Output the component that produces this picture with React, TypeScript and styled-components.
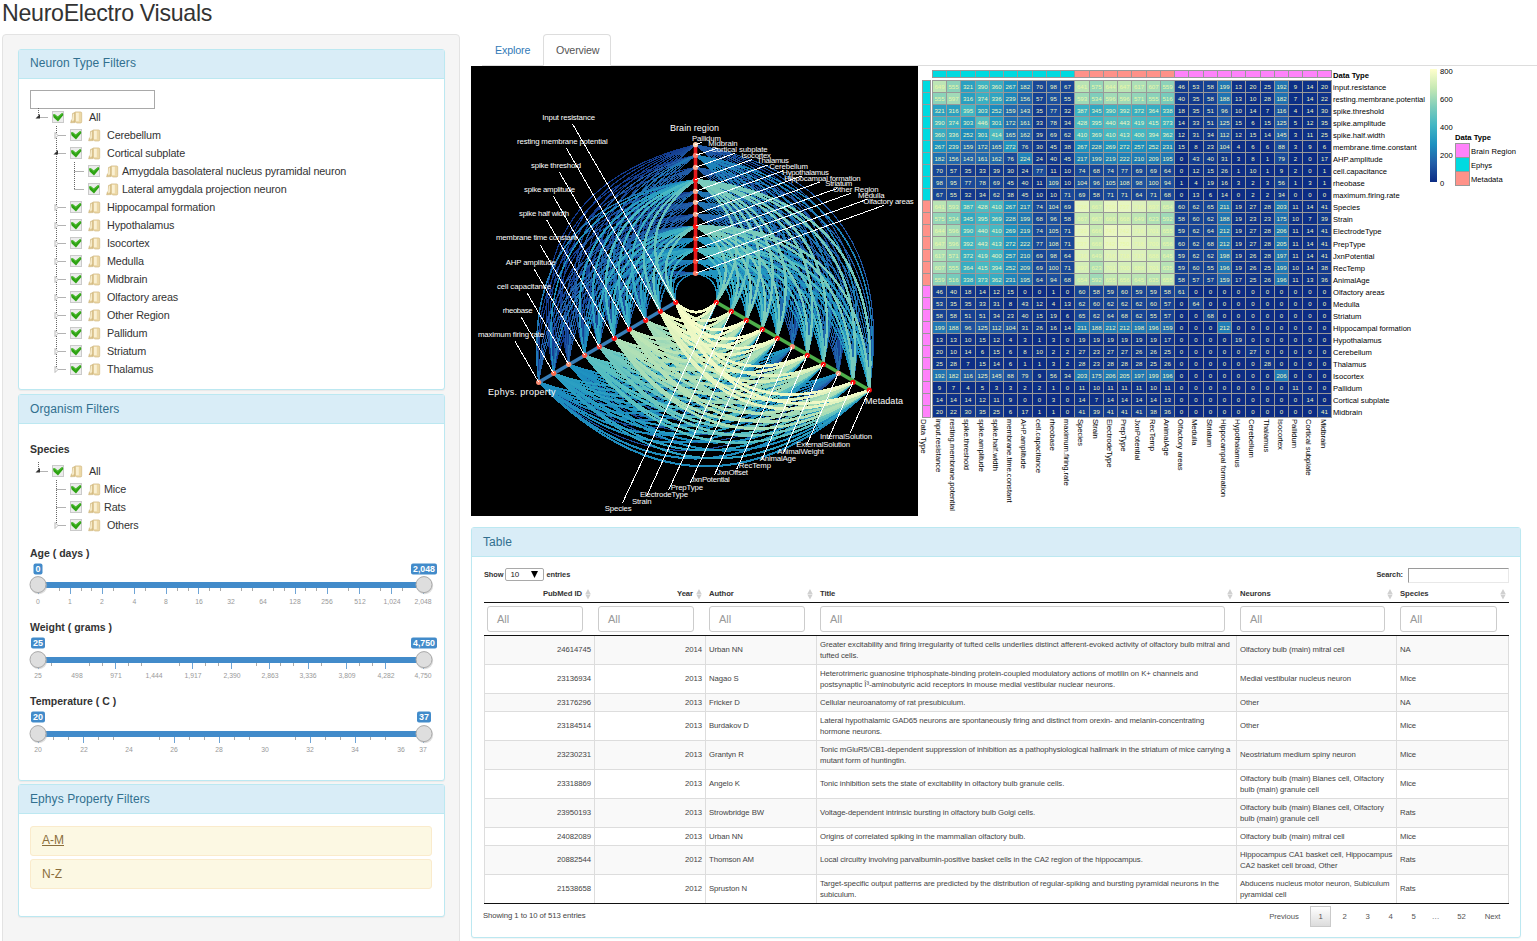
import React from "react";
import styled, { createGlobalStyle } from "styled-components";

const GlobalStyle = createGlobalStyle`
  *, *::before, *::after { box-sizing: border-box; }
  html, body { margin: 0; padding: 0; background: #fff; }
  body {
    height: 941px;
    overflow: hidden;
    color: #333;
    font-family: "Liberation Sans", Arial, sans-serif;
    font-size: 11px;
    line-height: 18px;
  }
`;

/* ---------- page frame ---------- */

const Page = styled.div`
  display: flex;
  flex-direction: column;
  width: 1537px;
  height: 941px;
  overflow: hidden;
`;

const PageTitle = styled.h1`
  flex: none;
  height: 34px;
  margin: 0;
  padding-left: 2px;
  font-size: 23.2px;
  font-weight: 400;
  line-height: 26px;
  letter-spacing: -0.3px;
`;

const Main = styled.div`
  display: flex;
  flex: 1;
  min-height: 0;
`;

const Sidebar = styled.aside`
  flex: none;
  display: flex;
  flex-direction: column;
  width: 458px;
  height: 940px;
  margin-left: 2px;
  padding: 14px 14px 0 15px;
  background: #f5f5f5;
  border: 1px solid #e3e3e3;
  border-radius: 4px;
`;

const Content = styled.main`
  flex: none;
  display: flex;
  flex-direction: column;
  width: 1066px;
  margin-left: 11px;
`;

const PanelBox = styled.section<{ $height: number; $gap?: number; $width?: number }>`
  flex: none;
  width: ${(p) => p.$width ?? 427}px;
  height: ${(p) => p.$height}px;
  margin-bottom: ${(p) => p.$gap ?? 0}px;
  background: #fff;
  border: 1px solid #bce8f1;
  border-radius: 3px;
  box-shadow: 0 1px 1px rgba(0, 0, 0, 0.05);
`;

const PanelHeader = styled.h3<{ $low?: boolean }>`
  height: 29px;
  margin: 0;
  padding: 0 11px;
  background: #d9edf7;
  border-bottom: 1px solid #bce8f1;
  color: #31708f;
  font-size: 12px;
  font-weight: 400;
  letter-spacing: 0.08px;
  line-height: ${(p) => (p.$low ? 29 : 27)}px;
`;

const PanelBody = styled.div<{ $top?: number }>`
  padding: ${(p) => p.$top ?? 11}px 12px 0 11px;
`;

/* ---------- trees ---------- */

const TreeSearch = styled.input`
  display: block;
  width: 125px;
  height: 19px;
  margin: 0 0 -1px;
  border: 1px solid #a9a9a9;
  outline: none;
`;

const TreeRow = styled.div`
  display: flex;
  align-items: center;
  height: 18px;
  white-space: nowrap;
`;

const TreeLabel = styled.span<{ $leaf?: boolean }>`
  padding-left: ${(p) => (p.$leaf ? 3 : 6)}px;
  color: #333;
  font-size: 10.8px;
  letter-spacing: -0.14px;
`;

const TreeGlyph = styled.svg`
  display: block;
  flex: none;
`;

const FieldLabel = styled.div`
  height: 18px;
  color: #333;
  font-size: 10.5px;
  font-weight: 700;
`;

const SliderGroup = styled.div`
  height: 74px;
`;

const SliderSvg = styled.svg`
  display: block;
  overflow: visible;
`;

const TreeStack = styled.div<{ $top?: number; $bottom?: number }>`
  padding-top: ${(p) => p.$top ?? 0}px;
  padding-bottom: ${(p) => p.$bottom ?? 0}px;
`;

type Connector = "root" | "mid" | "midOpen" | "last" | "branch" | "leafEnd";
type Node = { label: string; depth: number; kind: Connector; leaf?: boolean; rail?: boolean };

const treeNodes: Node[] = [
  { label: "All", depth: 0, kind: "root" },
  { label: "Cerebellum", depth: 1, kind: "mid" },
  { label: "Cortical subplate", depth: 1, kind: "midOpen" },
  { label: "Amygdala basolateral nucleus pyramidal neuron", depth: 2, kind: "branch", leaf: true, rail: true },
  { label: "Lateral amygdala projection neuron", depth: 2, kind: "leafEnd", leaf: true, rail: true },
  ...["Hippocampal formation", "Hypothalamus", "Isocortex", "Medulla", "Midbrain", "Olfactory areas", "Other Region", "Pallidum", "Striatum"].map(
    (label) => ({ label, depth: 1, kind: "mid" as Connector })
  ),
  { label: "Thalamus", depth: 1, kind: "last" },
];

const speciesNodes: Node[] = [
  { label: "All", depth: 0, kind: "root" },
  { label: "Mice", depth: 1, kind: "branch", leaf: true },
  { label: "Rats", depth: 1, kind: "branch", leaf: true },
  { label: "Others", depth: 1, kind: "last" },
];

function TreeItem({ node }: { node: Node }) {
  const cx = 8.5 + node.depth * 18;
  const width = 22 + node.depth * 18;
  const ends = node.kind === "root" || node.kind === "last" || node.kind === "leafEnd";
  const dots = { stroke: "#666", strokeWidth: 1, strokeDasharray: "1 1", fill: "none" };
  return (
    <TreeRow>
      <TreeGlyph width={width} height={18}>
        {node.rail && <path d={`M${cx - 18} 0V18`} {...dots} />}
        <path d={`M${cx} 0V${ends ? 9 : 18}`} {...dots} />
        <path d={`M${cx} 9.5H${cx + 10}`} {...dots} />
        {(node.kind === "root" || node.kind === "midOpen") && <path d={`M${cx - 3} 10.5L${cx + 1.5} 6V10.5Z`} fill="#333" />}
        {(node.kind === "mid" || node.kind === "last") && (
          <path d={`M${cx - 1.5} 6.5V12.5L${cx + 1.5} 9.5Z`} fill="#fff" stroke="#aaa" strokeWidth={0.8} />
        )}
      </TreeGlyph>
      <TreeGlyph width={12} height={12} viewBox="0 0 12 12">
        <rect x="0.5" y="0.5" width="11" height="11" fill="#ececec" stroke="#cacaca" />
        <path d="M0.9 3.6L3 3.2L5.6 5.4L10.4 1.8L11.4 4L6 10.4L1.6 6.6Z" fill="#2ea313" />
        <path d="M1.4 4L3 3.8L5.6 6.4L10.3 2.6" fill="none" stroke="#57c43c" strokeWidth="0.9" />
      </TreeGlyph>
      <TreeGlyph width={19} height={13} viewBox="0 0 19 13">
        <path d="M8.5 2.4L11 1.4V11.6L6.6 11.8L7.2 9.5L8.3 8Z" fill="#dcc48c" stroke="#c9ae72" strokeWidth="0.5" />
        <path d="M9 3L10.2 2.4V9L8.4 10.5L8 9Z" fill="#f6ebca" />
        <path d="M11.2 0.9H16.3C17.4 0.9 17.7 1.3 17.7 2.3V10.8C17.7 11.6 17.3 12 16.5 12H13L11.2 11Z" fill="#ecd8a6" stroke="#cdb277" strokeWidth="0.6" />
        <path d="M12 1.8H14.8V10.2H12Z" fill="#faf0d2" />
      </TreeGlyph>
      <TreeLabel $leaf={node.leaf}>{node.label}</TreeLabel>
    </TreeRow>
  );
}

/* ---------- sliders ---------- */

type SliderSpec = {
  label: string;
  low: string;
  high: string;
  bar: number;
  major: number[];
  minor: number[];
  texts: [number, string][];
};

const sliders: SliderSpec[] = [
  {
    label: "Age ( days )",
    low: "0",
    high: "2,048",
    bar: 20,
    major: [38, 70, 102, 134, 166, 198, 295, 327, 359, 391, 423],
    minor: [59, 81, 91, 113, 145, 177, 188, 209, 220, 241, 252, 273, 284, 305, 316, 348, 380, 402],
    texts: [[38, "0"], [70, "1"], [102, "2"], [134.5, "4"], [166, "8"], [199, "16"], [231, "32"], [263, "64"], [295, "128"], [327, "256"], [360, "512"], [392, "1,024"], [423, "2,048"]],
  },
  {
    label: "Weight ( grams )",
    low: "25",
    high: "4,750",
    bar: 21,
    major: [38, 115, 192, 231, 269, 308, 346, 385, 423],
    minor: [51, 89, 102, 128, 141, 179, 205, 218, 256, 280, 293, 321, 359, 372],
    texts: [[38, "25"], [77, "498"], [116, "971"], [154, "1,444"], [193, "1,917"], [232, "2,390"], [270, "2,863"], [308, "3,336"], [347, "3,809"], [386, "4,282"], [423, "4,750"]],
  },
  {
    label: "Temperature ( C )",
    low: "20",
    high: "37",
    bar: 21,
    major: [38, 83, 174, 219, 310, 355, 423],
    minor: [53, 68, 98, 113, 159, 189, 204, 234, 249, 295, 325, 340, 370, 385],
    texts: [[38, "20"], [84, "22"], [129, "24"], [174, "26"], [219, "28"], [265, "30"], [310, "32"], [355, "34"], [401, "36"], [423, "37"]],
  },
];

function Badge({ x, text }: { x: number; text: string }) {
  const w = text.length === 1 ? 9 : text.length === 2 ? 14 : 26;
  return (
    <>
      <rect x={x - w / 2} y={1.5} width={w} height={11} rx={2} fill="#428bca" />
      <text x={x} y={10} fill="#fff" fontSize={8.3} fontWeight={700} textAnchor="middle" textLength={w - 4} lengthAdjust="spacingAndGlyphs">
        {text}
      </text>
    </>
  );
}

function Slider({ spec }: { spec: SliderSpec }) {
  const cy = spec.bar + 3;
  return (
    <SliderGroup>
      <FieldLabel>{spec.label}</FieldLabel>
      <SliderSvg width={410} height={48} viewBox="30 0 410 48">
        <rect x={38} y={spec.bar} width={386} height={6} fill="#428bca" />
        {spec.minor.map((x) => (
          <rect key={x} x={x} y={spec.bar + 6} width={1} height={3} fill="#aaa" />
        ))}
        {spec.major.map((x) => (
          <rect key={x} x={x} y={spec.bar + 6} width={1} height={6} fill="#6fa5d6" />
        ))}
        {[38, 424].map((x) => (
          <g key={x}>
            <circle cx={x + 0.7} cy={cy + 0.8} r={8.5} fill="#bbb" opacity={0.5} />
            <circle cx={x} cy={cy - 0.4} r={8} fill="#dedede" stroke="#aaa" />
          </g>
        ))}
        {spec.texts.map(([x, t]) => (
          <text key={t} x={x} y={42} fontSize={6.8} fill="#999" textAnchor="middle">
            {t}
          </text>
        ))}
        <Badge x={38} text={spec.low} />
        <Badge x={424} text={spec.high} />
      </SliderSvg>
    </SliderGroup>
  );
}

const Collapse = styled.div<{ $underline?: boolean }>`
  height: 30px;
  margin-bottom: 3px;
  padding-left: 11px;
  background: #fcf8e3;
  border: 1px solid #faebcc;
  border-radius: 3px;
  color: #8a6d3b;
  font-size: 12px;
  line-height: ${(p) => (p.$underline ? 27 : 29)}px;
  text-decoration: ${(p) => (p.$underline ? "underline" : "none")};
`;

/* ---------- tabs ---------- */

const Tabs = styled.nav`
  display: flex;
  flex: none;
  height: 32px;
  margin-left: 11px;
  border-bottom: 1px solid #ddd;
`;

const Tab = styled.a<{ $active?: boolean }>`
  width: ${(p) => (p.$active ? 68 : 61)}px;
  height: 32px;
  padding: 0 12px;
  border: 1px solid ${(p) => (p.$active ? "#ddd" : "transparent")};
  border-bottom-color: ${(p) => (p.$active ? "#fff" : "transparent")};
  border-radius: 4px 4px 0 0;
  background: ${(p) => (p.$active ? "#fff" : "transparent")};
  color: ${(p) => (p.$active ? "#555" : "#337ab7")};
  font-size: 10.7px;
  letter-spacing: -0.15px;
  line-height: 30px;
  white-space: nowrap;
`;

/* ---------- shared chart data ---------- */

const ephysNames = ["input.resistance", "resting.membrane.potential", "spike.threshold", "spike.amplitude", "spike.half.width", "membrane.time.constant", "AHP.amplitude", "cell.capacitance", "rheobase", "maximum.firing.rate"];
const metaNames = ["Species", "Strain", "ElectrodeType", "PrepType", "JxnPotential", "RecTemp", "AnimalAge"];
const brainNames = ["Olfactory areas", "Medulla", "Striatum", "Hippocampal formation", "Hypothalamus", "Cerebellum", "Thalamus", "Isocortex", "Pallidum", "Cortical subplate", "Midbrain"];
const allNames = [...ephysNames, ...metaNames, ...brainNames];

const counts: number[][] = [
  [649, 555, 321, 390, 360, 267, 182, 70, 98, 67, 641, 575, 644, 647, 617, 607, 559, 46, 53, 58, 199, 13, 20, 25, 192, 9, 14, 20],
  [555, 597, 316, 374, 336, 239, 156, 57, 95, 55, 593, 534, 596, 596, 571, 555, 516, 40, 35, 58, 188, 13, 10, 28, 182, 7, 14, 22],
  [321, 316, 395, 303, 252, 159, 143, 35, 77, 32, 387, 345, 390, 392, 372, 364, 338, 18, 35, 51, 96, 10, 14, 7, 116, 4, 14, 30],
  [390, 374, 303, 446, 301, 172, 161, 33, 78, 34, 428, 395, 440, 443, 419, 415, 373, 14, 33, 51, 125, 15, 6, 15, 125, 5, 12, 35],
  [360, 336, 252, 301, 414, 165, 162, 39, 69, 62, 410, 369, 410, 413, 400, 394, 362, 12, 31, 34, 112, 12, 15, 14, 145, 3, 11, 25],
  [267, 239, 159, 172, 165, 272, 76, 30, 45, 38, 267, 228, 269, 272, 257, 252, 231, 15, 8, 23, 104, 4, 6, 6, 88, 3, 9, 6],
  [182, 156, 143, 161, 162, 76, 224, 24, 40, 45, 217, 199, 219, 222, 210, 209, 195, 0, 43, 40, 31, 3, 8, 1, 79, 2, 0, 17],
  [70, 57, 35, 33, 39, 30, 24, 77, 11, 10, 74, 68, 74, 77, 69, 69, 64, 0, 12, 15, 26, 1, 10, 1, 9, 2, 0, 1],
  [98, 95, 77, 78, 69, 45, 40, 11, 109, 10, 104, 96, 105, 108, 98, 100, 94, 1, 4, 19, 16, 3, 2, 3, 56, 1, 3, 1],
  [67, 55, 32, 34, 62, 38, 45, 10, 10, 71, 69, 58, 71, 71, 64, 71, 68, 0, 13, 6, 14, 0, 2, 2, 34, 0, 0, 0],
];
const metaBlock: number[][] = [
  [738, 667, 739, 737, 716, 697, 654, 60, 62, 65, 211, 19, 27, 28, 203, 11, 14, 41],
  [667, 667, 666, 668, 649, 623, 592, 58, 60, 62, 188, 19, 23, 23, 175, 10, 7, 39],
  [739, 666, 747, 742, 716, 701, 655, 59, 62, 64, 212, 19, 27, 28, 206, 11, 14, 41],
  [737, 668, 742, 750, 718, 700, 656, 60, 62, 68, 212, 19, 27, 28, 205, 11, 14, 41],
  [716, 649, 716, 718, 717, 688, 645, 59, 62, 62, 198, 19, 26, 28, 197, 11, 14, 41],
  [697, 623, 701, 700, 688, 701, 635, 59, 60, 55, 196, 19, 26, 25, 199, 10, 14, 38],
  [654, 592, 655, 656, 645, 635, 655, 58, 57, 57, 159, 17, 25, 26, 196, 11, 13, 36],
];
const brainDiagonal = [61, 64, 68, 212, 19, 27, 28, 206, 11, 14, 41];

function cell(r: number, c: number): number {
  if (r > c) return cell(c, r);
  if (r < 10) return counts[r][c];
  if (r < 17) return metaBlock[r - 10][c - 10];
  return r === c ? brainDiagonal[r - 17] : 0;
}

const ramp = [
  [12, 44, 132],
  [34, 94, 168],
  [29, 145, 192],
  [65, 182, 196],
  [127, 205, 187],
  [199, 233, 180],
  [255, 255, 204],
];

function shade(t: number): string {
  const p = Math.max(0, Math.min(0.9999, t)) * 6;
  const i = Math.floor(p);
  const f = p - i;
  return `rgb(${ramp[i].map((v, k) => Math.round(v + (ramp[i + 1][k] - v) * f)).join(",")})`;
}

/* ---------- hive plot ---------- */

const Charts = styled.div`
  display: flex;
  flex: none;
  height: 461px;
`;

const ChartSvg = styled.svg`
  display: block;
  flex: none;
  font-family: "Liberation Sans", Arial, sans-serif;
`;

type Point = [number, number];
type HiveLabel = [text: string, left: number, right: number, y: number, lineX: number, lineY: number];

const ephysPoints: Point[] = [[675.7, 302.3], [660.3, 311.3], [645.7, 320.3], [629.3, 329.3], [614.3, 338.3], [599.3, 346.7], [584.7, 355.3], [568.7, 364.3], [553.7, 373.3], [538.7, 382.3]];
const metaPoints: Point[] = [[716.3, 302.3], [731.3, 311.3], [746.3, 320.3], [762.3, 329.3], [777.3, 338.3], [792.3, 346.7], [807.3, 355.3], [823.3, 364.3], [838.3, 373.3], [853, 382.3], [869.3, 390]];
const brainPoints: Point[] = [144.7, 155.3, 167.3, 179.7, 191.3, 202.3, 214.3, 226.3, 238.3, 249.3, 261.3, 273.3].map((y) => [695.5, y]);

const ephysLabels: HiveLabel[] = [
  ["Input resistance", 542.3, 595, 117, 572.7, 124.3],
  ["resting membrane potential", 517, 607.7, 141, 566.3, 148],
  ["spike threshold", 531, 581, 165, 559.3, 172],
  ["spike amplitude", 524, 575, 189, 553.3, 196],
  ["spike half width", 519, 569, 213, 546.7, 220],
  ["membrane time constant", 496, 577, 237, 540.3, 245],
  ["AHP amplitude", 505.7, 555.7, 262, 534.3, 269.3],
  ["cell capacitance", 497, 551, 286, 527.3, 293.3],
  ["rheobase", 502.7, 532.7, 310, 521.3, 317.3],
  ["maximum firing rate", 478, 544, 334, 515, 341.3],
];
const brainLabels: HiveLabel[] = [
  ["Pallidum", 692, 721, 138, 701.7, 142.3],
  ["Midbrain", 708.3, 737.7, 143, 718.3, 148],
  ["Cortical subplate", 711.3, 767.7, 149, 735, 153.3],
  ["Isocortex", 741.3, 771, 155, 751.7, 159.7],
  ["Thalamus", 757, 789, 160.3, 767.7, 165],
  ["Cerebellum", 769.3, 808, 166, 783.3, 170.7],
  ["Hypothalamus", 782.3, 829, 172, 801.7, 176],
  ["Hippocampal formation", 784.3, 860.7, 178, 820, 182],
  ["Striatum", 825.3, 852.3, 183.3, 836.7, 188.7],
  ["Other Region", 833, 878.7, 189, 850.7, 193.3],
  ["Medulla", 858, 884.7, 195, 867.3, 199.3],
  ["Olfactory areas", 863.3, 913.7, 201, 884, 205.3],
];
const metaLabels: HiveLabel[] = [
  ["Species", 604.7, 631.7, 508, 622.3, 503.3],
  ["Strain", 632, 651.7, 501, 646.7, 496],
  ["ElectrodeType", 640, 688, 494, 668.7, 490],
  ["PrepType", 670.7, 703, 487, 690, 483.3],
  ["JxnPotential", 690.7, 729.7, 479, 714.3, 475.3],
  ["JxnOffset", 717, 748, 472, 736.7, 469.3],
  ["RecTemp", 738.7, 771, 465, 761.7, 460],
  ["AnimalAge", 759.7, 796, 458, 783.3, 453.3],
  ["AnimalWeight", 777.3, 824, 451, 806.7, 445],
  ["ExternalSolution", 796.3, 850, 444, 828.3, 439.3],
  ["InternalSolution", 820, 872, 436, 850, 433.3],
];

const dimNode: Record<string, string> = {
  "cell capacitance": "#fc9272",
  rheobase: "#fb6a4a",
  "maximum firing rate": "#fc8d74",
  "membrane time constant": "#f9433a",
  "AHP amplitude": "#fb5a48",
  Pallidum: "#fcd5b5",
  Midbrain: "#fc7d68",
  "Cortical subplate": "#fcae91",
  Thalamus: "#fcae91",
  Cerebellum: "#fcc0a0",
  Hypothalamus: "#fcae91",
  Striatum: "#fb4a3a",
  Medulla: "#fb4a3a",
  "Olfactory areas": "#fc7d68",
  JxnOffset: "#fc8d74",
  AnimalWeight: "#fca58c",
};

/* heatmap row for each node of an axis, with the share of its count where two nodes split one row */
const metaSource: Point[] = [[10, 1], [11, 1], [12, 1], [13, 1], [14, 1], [14, 0.14], [15, 1], [16, 1], [16, 0.13], [13, 0.95], [13, 0.95]];
const brainSource: Point[] = [[25, 1], [27, 1], [26, 1], [24, 1], [23, 1], [22, 1], [21, 1], [20, 1], [19, 1], [24, 0.7], [18, 1], [17, 1]];

type Edge = { d: string; v: number; t: number };

/* a symmetric arc that bulges to one side of the chord between its nodes */
function curve(a: Point, b: Point, side: 1 | -1): string {
  const k = 0.485 * side;
  const cx = (a[0] + b[0]) / 2 + (b[1] - a[1]) * k;
  const cy = (a[1] + b[1]) / 2 - (b[0] - a[0]) * k;
  return `M${a[0]} ${a[1]}Q${cx.toFixed(1)} ${cy.toFixed(1)} ${b[0]} ${b[1]}`;
}

const edges: Edge[] = [];
function addEdge(a: Point, b: Point, side: 1 | -1, v: number, top: number) {
  if (v > 0) edges.push({ d: curve(a, b, side), v, t: Math.sqrt(v / top) });
}
brainPoints.forEach((b, i) => {
  const [row, share] = brainSource[i];
  ephysPoints.forEach((e, j) => addEdge(b, e, -1, cell(j, row) * share, 540));
  metaPoints.forEach((m, j) => addEdge(b, m, 1, cell(metaSource[j][0], row) * share * metaSource[j][1], 480));
});
ephysPoints.forEach((e, i) => {
  metaPoints.forEach((m, j) => addEdge(e, m, -1, cell(i, metaSource[j][0]) * metaSource[j][1], 680));
});
edges.sort((a, b) => a.v - b.v);

const edgeWidth = (v: number) => (v > 300 ? 2.7 : v > 140 ? 2.3 : v > 60 ? 2 : v > 30 ? 1.5 : 1.1);

function HiveText({ label }: { label: HiveLabel }) {
  const [text, left, right, y] = label;
  return (
    <text x={left} y={y + 2.7} fontSize={7.8} fill="#fff" textLength={right - left}>
      {text}
    </text>
  );
}

function HivePlot() {
  const groups: [HiveLabel[], Point[]][] = [
    [ephysLabels, ephysPoints],
    [brainLabels, brainPoints],
    [metaLabels, metaPoints],
  ];
  return (
    <ChartSvg width={447} height={450} viewBox="471 66 447 450">
      <rect x={471} y={66} width={447} height={450} fill="#000" />
      <g fill="none" shapeRendering="crispEdges">
        {edges.map((e, i) => (
          <path key={i} d={e.d} stroke={shade(e.t)} strokeWidth={edgeWidth(e.v)} />
        ))}
      </g>
      <g strokeWidth={3.6}>
        <path d="M695.5 144.7V273.3" stroke="#e41a1c" />
        <path d="M675.7 302.3L538.7 382.3" stroke="#377eb8" />
        <path d="M716.3 302.3L869.3 390" stroke="#4daf4a" />
      </g>
      {groups.map(([labels, points]) =>
        labels.map((l, i) => (
          <g key={l[0]}>
            <circle cx={points[i][0]} cy={points[i][1]} r={2.6} fill={dimNode[l[0]] ?? "#ff0d0d"} />
            <path d={`M${l[4]} ${l[5]}L${points[i][0]} ${points[i][1]}`} stroke="#fff" strokeWidth={1} shapeRendering="crispEdges" />
          </g>
        ))
      )}
      {groups.map(([labels]) => labels.map((l) => <HiveText key={l[0]} label={l} />))}
      <g fill="#fff" fontSize={9}>
        <text x={670} y={131} textLength={49}>Brain region</text>
        <text x={488} y={395} textLength={67.5}>Ephys. property</text>
        <text x={865} y={404} textLength={38}>Metadata</text>
      </g>
    </ChartSvg>
  );
}

/* ---------- heatmap ---------- */

const kindColor = (i: number) => (i < 10 ? "#00dae0" : i < 17 ? "#ff9289" : "#ff82fa");
const colX = (i: number) => Math.floor(932.3 + (i * 399) / 28) + 0.5;
const rowY = (i: number) => Math.round(80 + (i * 337) / 28) + 0.5;
const labelShift = (i: number) => (i > 5 && i < 17 ? 1 : 0.3);

function Heatmap() {
  const idx = allNames.map((_, i) => i);
  return (
    <ChartSvg width={619} height={455} viewBox="918 66 619 455">
      <defs>
        <linearGradient id="scale" x1="0" y1="1" x2="0" y2="0">
          {ramp.map((c, i) => (
            <stop key={i} offset={i / 6} stopColor={`rgb(${c.join(",")})`} />
          ))}
        </linearGradient>
      </defs>
      <g stroke="#999" strokeWidth={1}>
        {idx.map((i) => (
          <rect key={`t${i}`} x={colX(i)} y={70.5} width={colX(i + 1) - colX(i)} height={7} fill={kindColor(i)} />
        ))}
        {idx.map((i) => (
          <rect key={`l${i}`} x={922.5} y={rowY(i)} width={8} height={rowY(i + 1) - rowY(i)} fill={kindColor(i)} />
        ))}
        {idx.map((r) =>
          idx.map((c) => (
            <rect key={`${r}-${c}`} x={colX(c)} y={rowY(r)} width={colX(c + 1) - colX(c)} height={rowY(r + 1) - rowY(r)} fill={shade(cell(r, c) / 800)} />
          ))
        )}
      </g>
      <g fill="#f4f8c0" fontSize={6.1} textAnchor="middle">
        {idx.map((r) =>
          idx.map((c) => (
            <text key={`${r}-${c}`} x={(colX(c) + colX(c + 1)) / 2} y={(rowY(r) + rowY(r + 1)) / 2 + 2.6} fill={cell(r, c) > 480 ? "#e9f7a8" : undefined}>
              {cell(r, c)}
            </text>
          ))
        )}
      </g>
      <g fill="#000" fontSize={7.6}>
        {allNames.map((n, i) => (
          <text key={`r${n}`} x={1333} y={(rowY(i) + rowY(i + 1)) / 2 + 2.7 + labelShift(i)}>
            {n}
          </text>
        ))}
        {allNames.map((n, i) => (
          <text key={`c${n}`} transform={`translate(${(colX(i) + colX(i + 1)) / 2 - 4} 419) rotate(90)`}>
            {n}
          </text>
        ))}
        <text transform="translate(921 419) rotate(90)">Data Type</text>
        {[800, 600, 400, 200, 0].map((v, i) => (
          <text key={v} x={1440} y={74 + i * 28}>
            {v}
          </text>
        ))}
        <text x={1471} y={154} textLength={45}>Brain Region</text>
        <text x={1471} y={168}>Ephys</text>
        <text x={1471} y={182}>Metadata</text>
      </g>
      <g fill="#000" fontSize={7.7} fontWeight={700}>
        <text x={1333} y={78} textLength={36}>Data Type</text>
        <text x={1455} y={140} textLength={36}>Data Type</text>
      </g>
      <rect x={1430} y={69} width={7} height={113} fill="url(#scale)" />
      <g stroke="#999">
        <rect x={1455.5} y={143.5} width={14} height={14} fill="#ff82fa" />
        <rect x={1455.5} y={157.5} width={14} height={14} fill="#00dae0" />
        <rect x={1455.5} y={171.5} width={14} height={14} fill="#ff9289" />
      </g>
    </ChartSvg>
  );
}

/* ---------- data table ---------- */

const columns = "110px 111px 111px 420px 160px 113px";

const TableArea = styled.div`
  display: flex;
  flex-direction: column;
  padding: 10px 11px 0 12px;
  color: #444;
  font-size: 7.75px;
  letter-spacing: -0.07px;
  line-height: 11px;
`;

const Controls = styled.div`
  display: flex;
  justify-content: space-between;
  height: 18px;
  color: #333;
  font-weight: 700;
`;

const Control = styled.label`
  display: flex;
  align-items: center;
  height: 15px;
  font-size: 7.4px;
`;

const LengthSelect = styled.span`
  display: flex;
  align-items: center;
  justify-content: space-between;
  width: 39px;
  height: 13px;
  margin: 0 2px 0 2px;
  padding: 0 5px 0 4px;
  background: #fff;
  border: 1px solid #a9a9a9;
  border-radius: 2px;
  color: #222;
  font-size: 8px;
  font-weight: 400;
`;

const Caret = styled.svg`
  display: block;
`;

const SearchInput = styled.input`
  width: 101px;
  height: 15px;
  margin: 1px 0 0 5px;
  border: 1px solid #e8e8e8;
  border-top-color: #9a9a9a;
  border-left-color: #9a9a9a;
  outline: none;
`;

const HeadRow = styled.div`
  display: grid;
  grid-template-columns: ${columns};
  height: 18px;
  border-bottom: 1px solid #111;
`;

const HeadCell = styled.div<{ $right?: boolean }>`
  display: flex;
  align-items: flex-start;
  justify-content: ${(p) => (p.$right ? "flex-end" : "space-between")};
  gap: 3px;
  padding: 3px 3px 0 4px;
  color: #333;
  font-size: 7.7px;
  font-weight: 700;
`;

const SortSvg = styled.svg`
  display: block;
  flex: none;
  margin-top: 1px;
`;

const FilterRow = styled.div`
  display: grid;
  grid-template-columns: ${columns};
  height: 33px;
  border-bottom: 1px solid #111;
`;

const FilterBox = styled.div<{ $edge?: "first" | "last" }>`
  height: 26px;
  margin: 3px ${(p) => (p.$edge === "last" ? 12 : 11)}px 0 ${(p) => (p.$edge === "first" ? 3 : 4)}px;
  padding-left: 9px;
  border: 1px solid #ccc;
  border-radius: 3px;
  color: #999;
  font-size: 11px;
  line-height: 24px;
`;

const BodyRow = styled.div<{ $odd: boolean; $tall: boolean; $last: boolean }>`
  display: grid;
  grid-template-columns: ${columns};
  height: ${(p) => (p.$tall ? 29 : 18)}px;
  background: ${(p) => (p.$odd ? "#f9f9f9" : "#fff")};
  border-bottom: 1px solid ${(p) => (p.$last ? "#111" : "#ddd")};
`;

const Cell = styled.div<{ $right?: boolean }>`
  display: flex;
  flex-direction: column;
  justify-content: center;
  padding: 0 3px 1px;
  border-left: 1px solid #ddd;
  text-align: ${(p) => (p.$right ? "right" : "left")};
  white-space: nowrap;
  &:last-child { border-right: 1px solid #ddd; }
`;

const Footer = styled.div`
  display: flex;
  align-items: flex-start;
  justify-content: space-between;
  height: 30px;
  padding-top: 2px;
`;

const Info = styled.div`
  margin-left: -1px;
  padding-top: 4px;
`;

const Pager = styled.div`
  display: flex;
  margin-right: 1px;
  color: #555;
`;

const PageButton = styled.span<{ $current?: boolean; $width?: number }>`
  width: ${(p) => p.$width ?? 23}px;
  height: 21px;
  margin-right: ${(p) => (p.$current ? 2 : 0)}px;
  border: 1px solid ${(p) => (p.$current ? "#cacaca" : "transparent")};
  background: ${(p) => (p.$current ? "linear-gradient(#fff, #dcdcdc)" : "none")};
  line-height: 20px;
  text-align: center;
`;

type Row = { id: string; year: string; author: string; title: string[]; neurons: string[]; species: string };

const rows: Row[] = [
  { id: "24614745", year: "2014", author: "Urban NN", title: ["Greater excitability and firing irregularity of tufted cells underlies distinct afferent-evoked activity of olfactory bulb mitral and", "tufted cells."], neurons: ["Olfactory bulb (main) mitral cell"], species: "NA" },
  { id: "23136934", year: "2013", author: "Nagao S", title: ["Heterotrimeric guanosine triphosphate-binding protein-coupled modulatory actions of motilin on K+ channels and", "postsynaptic Î³-aminobutyric acid receptors in mouse medial vestibular nuclear neurons."], neurons: ["Medial vestibular nucleus neuron"], species: "Mice" },
  { id: "23176296", year: "2013", author: "Fricker D", title: ["Cellular neuroanatomy of rat presubiculum."], neurons: ["Other"], species: "NA" },
  { id: "23184514", year: "2013", author: "Burdakov D", title: ["Lateral hypothalamic GAD65 neurons are spontaneously firing and distinct from orexin- and melanin-concentrating", "hormone neurons."], neurons: ["Other"], species: "Mice" },
  { id: "23230231", year: "2013", author: "Grantyn R", title: ["Tonic mGluR5/CB1-dependent suppression of inhibition as a pathophysiological hallmark in the striatum of mice carrying a", "mutant form of huntingtin."], neurons: ["Neostriatum medium spiny neuron"], species: "Mice" },
  { id: "23318869", year: "2013", author: "Angelo K", title: ["Tonic inhibition sets the state of excitability in olfactory bulb granule cells."], neurons: ["Olfactory bulb (main) Blanes cell, Olfactory", "bulb (main) granule cell"], species: "Mice" },
  { id: "23950193", year: "2013", author: "Strowbridge BW", title: ["Voltage-dependent intrinsic bursting in olfactory bulb Golgi cells."], neurons: ["Olfactory bulb (main) Blanes cell, Olfactory", "bulb (main) granule cell"], species: "Rats" },
  { id: "24082089", year: "2013", author: "Urban NN", title: ["Origins of correlated spiking in the mammalian olfactory bulb."], neurons: ["Olfactory bulb (main) mitral cell"], species: "Mice" },
  { id: "20882544", year: "2012", author: "Thomson AM", title: ["Local circuitry involving parvalbumin-positive basket cells in the CA2 region of the hippocampus."], neurons: ["Hippocampus CA1 basket cell, Hippocampus", "CA2 basket cell broad, Other"], species: "Rats" },
  { id: "21538658", year: "2012", author: "Spruston N", title: ["Target-specific output patterns are predicted by the distribution of regular-spiking and bursting pyramidal neurons in the", "subiculum."], neurons: ["Abducens nucleus motor neuron, Subiculum", "pyramidal cell"], species: "Rats" },
];

const headings = ["PubMed ID", "Year", "Author", "Title", "Neurons", "Species"];

function SortIcon() {
  return (
    <SortSvg width={6} height={11} viewBox="0 0 6 11">
      <path d="M0.3 5L3 0L5.7 5Z M0.3 5.6L3 10.6L5.7 5.6Z" fill="#d0d0d0" />
    </SortSvg>
  );
}

function DataTable() {
  return (
    <TableArea>
      <Controls>
        <Control>
          Show
          <LengthSelect>
            10
            <Caret width={7} height={7} viewBox="0 0 7 7">
              <path d="M0 0H7L3.5 7Z" fill="#000" />
            </Caret>
          </LengthSelect>
          entries
        </Control>
        <Control>
          Search:
          <SearchInput />
        </Control>
      </Controls>
      <HeadRow>
        {headings.map((h, i) => (
          <HeadCell key={h} $right={i < 2}>
            {h}
            <SortIcon />
          </HeadCell>
        ))}
      </HeadRow>
      <FilterRow>
        {headings.map((h, i) => (
          <FilterBox key={h} $edge={i === 0 ? "first" : i === headings.length - 1 ? "last" : undefined}>
            All
          </FilterBox>
        ))}
      </FilterRow>
      {rows.map((r, i) => (
        <BodyRow key={r.id} $odd={i % 2 === 0} $tall={r.title.length > 1 || r.neurons.length > 1} $last={i === rows.length - 1}>
          <Cell $right>{r.id}</Cell>
          <Cell $right>{r.year}</Cell>
          <Cell>{r.author}</Cell>
          <Cell>
            {r.title.map((t) => (
              <span key={t}>{t}</span>
            ))}
          </Cell>
          <Cell>
            {r.neurons.map((t) => (
              <span key={t}>{t}</span>
            ))}
          </Cell>
          <Cell>{r.species}</Cell>
        </BodyRow>
      ))}
      <Footer>
        <Info>Showing 1 to 10 of 513 entries</Info>
        <Pager>
          <PageButton $width={52}>Previous</PageButton>
          <PageButton $current $width={21}>1</PageButton>
          <PageButton>2</PageButton>
          <PageButton>3</PageButton>
          <PageButton>4</PageButton>
          <PageButton>5</PageButton>
          <PageButton $width={21}>…</PageButton>
          <PageButton $width={31}>52</PageButton>
          <PageButton $width={31}>Next</PageButton>
        </Pager>
      </Footer>
    </TableArea>
  );
}

/* ---------- app ---------- */

export default function App() {
  return (
    <Page>
      <GlobalStyle />
      <PageTitle>NeuroElectro Visuals</PageTitle>
      <Main>
        <Sidebar>
          <PanelBox $height={341} $gap={4}>
            <PanelHeader>Neuron Type Filters</PanelHeader>
            <PanelBody>
              <TreeSearch />
              {treeNodes.map((n) => (
                <TreeItem key={n.label} node={n} />
              ))}
            </PanelBody>
          </PanelBox>
          <PanelBox $height={387} $gap={3}>
            <PanelHeader $low>Organism Filters</PanelHeader>
            <PanelBody $top={16}>
              <FieldLabel>Species</FieldLabel>
              <TreeStack $top={4} $bottom={10}>
                {speciesNodes.map((n) => (
                  <TreeItem key={n.label} node={n} />
                ))}
              </TreeStack>
              {sliders.map((s) => (
                <Slider key={s.label} spec={s} />
              ))}
            </PanelBody>
          </PanelBox>
          <PanelBox $height={133}>
            <PanelHeader $low>Ephys Property Filters</PanelHeader>
            <PanelBody $top={12}>
              <Collapse $underline>A-M</Collapse>
              <Collapse>N-Z</Collapse>
            </PanelBody>
          </PanelBox>
        </Sidebar>
        <Content>
          <Tabs>
            <Tab>Explore</Tab>
            <Tab $active>Overview</Tab>
          </Tabs>
          <Charts>
            <HivePlot />
            <Heatmap />
          </Charts>
          <PanelBox $height={411} $width={1050}>
            <PanelHeader $low>Table</PanelHeader>
            <DataTable />
          </PanelBox>
        </Content>
      </Main>
    </Page>
  );
}
